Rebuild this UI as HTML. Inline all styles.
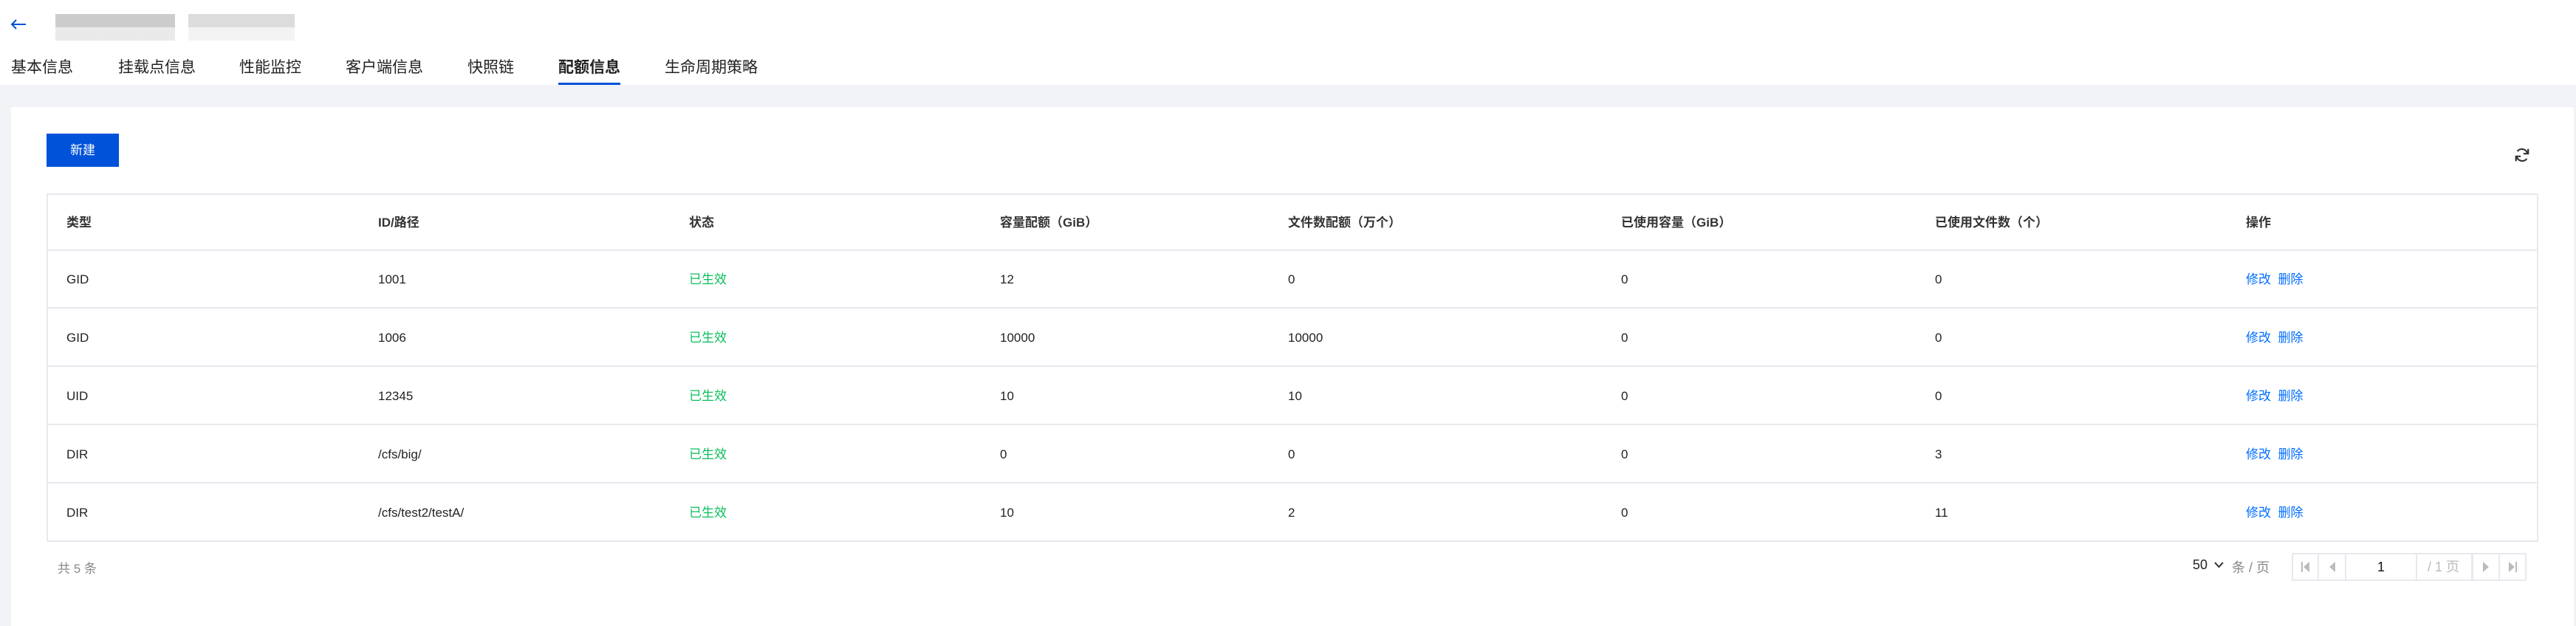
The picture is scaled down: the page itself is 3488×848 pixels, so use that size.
<!DOCTYPE html>
<html><head><meta charset="utf-8"><style>
*{margin:0;padding:0;box-sizing:border-box}
body{width:3488px;height:848px;overflow:hidden;background:#fff;font-family:"Liberation Sans","Noto Sans CJK SC",sans-serif;position:relative}
.a{position:absolute;white-space:nowrap}
.tab{position:absolute;top:80px;font-size:21px;color:#222;line-height:24px}
.gray{position:absolute;left:0;top:115px;width:3488px;height:733px;background:#f2f3f7}
.card{position:absolute;left:15px;top:145px;width:3470px;height:703px;background:#fff}
.tbl{position:absolute;left:63px;top:262px;width:3374px;height:472px;border:2px solid #e7e9ee}
.row{position:absolute;left:0;width:100%;height:78px;border-bottom:2px solid #e7e9ee}
.c{position:absolute;top:0;line-height:78px;font-size:17px;color:#222}
.h .c{font-weight:bold;color:#333}
.g{color:#0abf5b}.l{color:#006eff}
.pb{position:absolute;top:749px;height:38px;border:2px solid #e7e9ee;font-size:18px;line-height:34px;text-align:center;color:#bbb}
</style></head><body>
<svg class="a" style="left:14px;top:26px" width="22" height="14" viewBox="0 0 22 14"><path d="M21 7H2M8 1L2 7l6 6" stroke="#0052d9" stroke-width="2" fill="none"/></svg>
<div class="a" style="left:75px;top:19px;width:162px;height:36px;background:linear-gradient(#c0bfbf 50%,#e4e4e4 50%);opacity:.8"></div>
<div class="a" style="left:255px;top:19px;width:144px;height:36px;background:linear-gradient(#dcdcdc 50%,#f3f3f3 50%)"></div>
<div class="tab" style="left:15px">基本信息</div>
<div class="tab" style="left:160px">挂载点信息</div>
<div class="tab" style="left:324px">性能监控</div>
<div class="tab" style="left:468px">客户端信息</div>
<div class="tab" style="left:633px">快照链</div>
<div class="tab" style="left:756px;font-weight:bold">配额信息</div>
<div class="tab" style="left:900px">生命周期策略</div>
<div class="a" style="left:756px;top:112px;width:84px;height:4px;background:#0052d9"></div>
<div class="gray"></div>
<div class="card"></div>
<div class="a" style="left:63px;top:181px;width:98px;height:45px;background:#0052d9;color:#fff;font-size:17px;line-height:45px;text-align:center">新建</div>
<svg class="a" style="left:3404px;top:199px" width="22" height="22" viewBox="0 0 24 24"><path d="M20 10A8.5 8.5 0 0 0 5 6.5M4 14a8.5 8.5 0 0 0 15 3.5" stroke="#333" stroke-width="2.4" fill="none"/><path d="M21 3v7h-7M3 21v-7h7" stroke="#333" stroke-width="2.4" fill="none"/></svg>
<div class="tbl">
<div class="row h" style="top:0;height:76px"><div class="c" style="left:25px;line-height:76px">类型</div><div class="c" style="left:447px;line-height:76px">ID/路径</div><div class="c" style="left:868px;line-height:76px">状态</div><div class="c" style="left:1289px;line-height:76px">容量配额（GiB）</div><div class="c" style="left:1679px;line-height:76px">文件数配额（万个）</div><div class="c" style="left:2130px;line-height:76px">已使用容量（GiB）</div><div class="c" style="left:2555px;line-height:76px">已使用文件数（个）</div><div class="c" style="left:2976px;line-height:76px">操作</div></div>
<div class="row" style="top:76px"><div class="c" style="left:25px">GID</div><div class="c" style="left:447px">1001</div><div class="c g" style="left:868px">已生效</div><div class="c" style="left:1289px">12</div><div class="c" style="left:1679px">0</div><div class="c" style="left:2130px">0</div><div class="c" style="left:2555px">0</div><div class="c l" style="left:2976px">修改&nbsp;&nbsp;删除</div></div>
<div class="row" style="top:155px"><div class="c" style="left:25px">GID</div><div class="c" style="left:447px">1006</div><div class="c g" style="left:868px">已生效</div><div class="c" style="left:1289px">10000</div><div class="c" style="left:1679px">10000</div><div class="c" style="left:2130px">0</div><div class="c" style="left:2555px">0</div><div class="c l" style="left:2976px">修改&nbsp;&nbsp;删除</div></div>
<div class="row" style="top:234px"><div class="c" style="left:25px">UID</div><div class="c" style="left:447px">12345</div><div class="c g" style="left:868px">已生效</div><div class="c" style="left:1289px">10</div><div class="c" style="left:1679px">10</div><div class="c" style="left:2130px">0</div><div class="c" style="left:2555px">0</div><div class="c l" style="left:2976px">修改&nbsp;&nbsp;删除</div></div>
<div class="row" style="top:313px"><div class="c" style="left:25px">DIR</div><div class="c" style="left:447px">/cfs/big/</div><div class="c g" style="left:868px">已生效</div><div class="c" style="left:1289px">0</div><div class="c" style="left:1679px">0</div><div class="c" style="left:2130px">0</div><div class="c" style="left:2555px">3</div><div class="c l" style="left:2976px">修改&nbsp;&nbsp;删除</div></div>
<div class="row" style="top:392px;border-bottom:none"><div class="c" style="left:25px">DIR</div><div class="c" style="left:447px">/cfs/test2/testA/</div><div class="c g" style="left:868px">已生效</div><div class="c" style="left:1289px">10</div><div class="c" style="left:1679px">2</div><div class="c" style="left:2130px">0</div><div class="c" style="left:2555px">11</div><div class="c l" style="left:2976px">修改&nbsp;&nbsp;删除</div></div>
</div>
<div class="a" style="left:78px;top:756px;font-size:17px;color:#888">共 5 条</div>
<div class="a" style="left:2969px;top:755px;font-size:18px;color:#222">50</div>
<svg class="a" style="left:2998px;top:761px" width="13" height="9" viewBox="0 0 13 9"><path d="M1 1l5.5 6L12 1" stroke="#333" stroke-width="2" fill="none"/></svg>
<div class="a" style="left:3022px;top:755px;font-size:18px;color:#888">条 / 页</div>
<div class="pb" style="left:3103px;width:37px">
<svg width="12" height="14" viewBox="0 0 12 14" style="margin-top:10px"><path d="M1 0v14" stroke="#bbb" stroke-width="2"/><path d="M11 0v14L3 7z" fill="#bbb"/></svg></div>
<div class="pb" style="left:3138px;width:39px"><svg width="10" height="14" viewBox="0 0 10 14" style="margin-top:10px"><path d="M9 0v14L1 7z" fill="#bbb"/></svg></div>
<div class="pb" style="left:3175px;width:98px;color:#111">1</div>
<div class="pb" style="left:3271px;width:77px;border-left:none">/ 1 页</div>
<div class="pb" style="left:3347px;width:38px"><svg width="10" height="14" viewBox="0 0 10 14" style="margin-top:10px"><path d="M1 0v14L9 7z" fill="#bbb"/></svg></div>
<div class="pb" style="left:3383px;width:38px"><svg width="12" height="14" viewBox="0 0 12 14" style="margin-top:10px"><path d="M1 0v14L9 7z" fill="#bbb"/><path d="M11 0v14" stroke="#bbb" stroke-width="2"/></svg></div>
</body></html>
